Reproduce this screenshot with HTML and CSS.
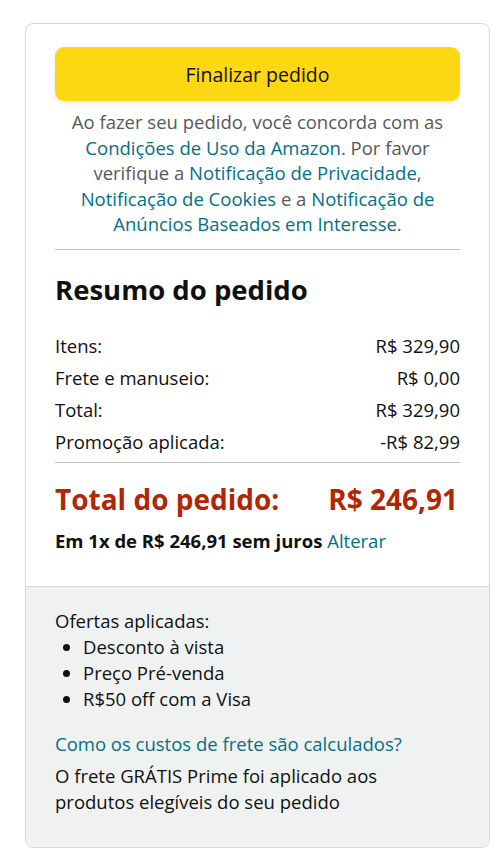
FILE: index.html
```html
<!DOCTYPE HTML>
<html lang="pt-BR">
<head>
<meta charset="UTF-8" />
<title>Resumo do pedido</title>
<link rel="stylesheet" href="styles.css">
</head>
<body>
<div class="box">
	<div class="main">
		<button class="placeOrder">Finalizar pedido</button>
		<p class="terms">
			Ao fazer seu pedido, você concorda com as<br>
			<a href="#">Condições de Uso da Amazon</a>. Por favor<br>
			verifique a <a href="#">Notificação de Privacidade</a>,<br>
			<a href="#">Notificação de Cookies</a> e a <a href="#">Notificação de<br>
			Anúncios Baseados em Interesse</a>.
		</p>
		<hr class="divider">
		<h2 class="title">Resumo do pedido</h2>
		<div class="rows">
			<div class="row"><span>Itens:</span><span>R$ 329,90</span></div>
			<div class="row"><span>Frete e manuseio:</span><span>R$ 0,00</span></div>
			<div class="row"><span>Total:</span><span>R$ 329,90</span></div>
			<div class="row"><span>Promoção aplicada:</span><span>-R$ 82,99</span></div>
		</div>
		<hr class="divider">
		<div class="grandTotal"><span>Total do pedido:</span><span>R$ 246,91</span></div>
		<p class="installments"><b>Em 1x de R$ 246,91 sem juros</b> <a href="#">Alterar</a></p>
	</div>
	<div class="footer">
		<p class="offersTitle">Ofertas aplicadas:</p>
		<ul class="offers">
			<li>Desconto à vista</li>
			<li>Preço Pré-venda</li>
			<li>R$50 off com a Visa</li>
		</ul>
		<p class="shipLink"><a href="#">Como os custos de frete são calculados?</a></p>
		<p class="shipNote">O frete GRÁTIS Prime foi aplicado aos<br>produtos elegíveis do seu pedido</p>
	</div>
</div>
</body>
</html>
```

FILE: styles.css
```css
html,
body {
	margin: 0;
	padding: 0;
	background: #fff;
}

body {
	padding: 23px 10px 0 25px;
	font-family: "Open Sans", "Noto Sans", sans-serif;
	font-size: 18.5px;
	color: #0f1111;
}

a {
	color: #007185;
	text-decoration: none;
}

p {
	margin: 0;
}

.box {
	width: 463px;
	border: 1px solid #d5d9d9;
	border-radius: 8px;
	overflow: hidden;
}

.main {
	padding: 23px 29px 33px 29px;
}

.placeOrder {
	display: block;
	width: 100%;
	height: 54px;
	border: 0;
	border-radius: 9px;
	background: #ffd814;
	box-shadow: 0 2px 5px 0 rgba(213, 217, 217, .6);
	font-family: inherit;
	font-size: 19.5px;
	color: #0f1111;
}

.terms {
	margin-top: 8px;
	text-align: center;
	line-height: 25.5px;
	color: #565959;
	white-space: nowrap;
}

.divider {
	border: 0;
	border-top: 1px solid #bbbfbf;
	margin: 12px 0 0;
}

.title {
	margin: 23px 0 0;
	font-size: 27.5px;
	font-weight: 700;
	line-height: 34px;
}

.rows {
	margin-top: 23px;
}

.row {
	display: flex;
	justify-content: space-between;
	line-height: 32px;
}

.rows + .divider {
	margin-top: 4px;
}

.grandTotal {
	display: flex;
	justify-content: space-between;
	margin-top: 18px;
	padding-right: 2px;
	color: #b12704;
	font-size: 28px;
	font-weight: 700;
	line-height: 36px;
}

.installments {
	margin-top: 12px;
	line-height: 24px;
}

.footer {
	background: #f0f2f2;
	border-top: 1px solid #d5d9d9;
	padding: 21px 29px 32px 29px;
	line-height: 26px;
}

.offers {
	margin: 0;
	padding-left: 28px;
}

.shipLink {
	margin-top: 19px;
}

.shipNote {
	margin-top: 6px;
}
```
